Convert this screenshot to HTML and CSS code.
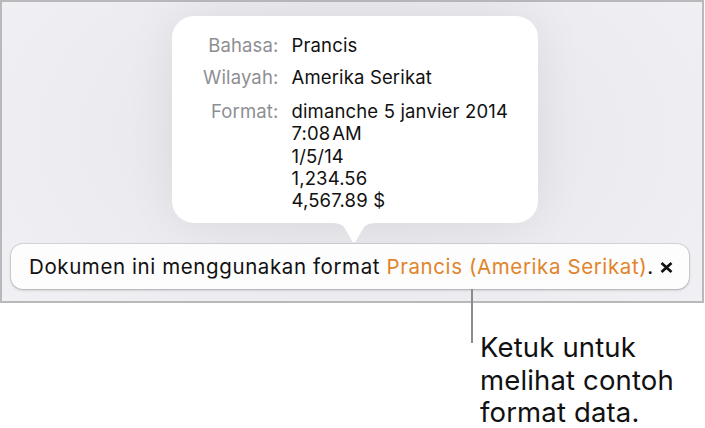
FILE: index.html
```html
<!DOCTYPE html>
<html lang="id">
<head>
<meta charset="utf-8">
<title>Format</title>
<link rel="stylesheet" href="styles.css">
</head>
<body>
<div class="frame">
  <div class="popover">
    <div class="bubble">
      <div class="grid">
        <div class="label">Bahasa:</div>
        <div class="value">Prancis</div>
        <div class="label">Wilayah:</div>
        <div class="value">Amerika Serikat</div>
        <div class="label fmt">Format:</div>
        <div class="value fmt">dimanche 5 janvier 2014<br>7:08&#8202;AM<br>1/5/14<br>1,234.56<br>4,567.89 $</div>
      </div>
    </div>
    <svg class="arrow" width="44" height="20" viewBox="0 0 44 20"><path d="M0 0 Q8 0 12 4 L20.5 18.6 Q22 20.4 23.5 18.6 L32 4 Q36 0 44 0 Z" fill="#fff"/></svg>
  </div>
  <div class="bar">
    <span class="msg">Dokumen ini menggunakan format <span class="link">Prancis (Amerika Serikat)</span>.</span>
    <svg class="close" width="13" height="11" viewBox="0 0 13 11"><path d="M1.5 1 L11.5 10 M11.5 1 L1.5 10" stroke="#111" stroke-width="2.7" stroke-linecap="butt"/></svg>
  </div>
</div>
<div class="callout">
  <div class="leader"></div>
  <p class="note">Ketuk untuk<br>melihat contoh<br>format data.</p>
</div>
</body>
</html>
```
FILE: styles.css
```css
html, body {
  margin: 0;
  padding: 0;
  background: #fff;
}
body {
  width: 705px;
  height: 428px;
  overflow: hidden;
  font-family: "Inter", "Liberation Sans", sans-serif;
  color: #111;
}
.frame {
  box-sizing: border-box;
  width: 704px;
  height: 303px;
  border: 2px solid #b9b9bc;
  background: radial-gradient(ellipse 420px 260px at 50% 45%, #e3e3e7 0%, #ececf0 60%, #f0f0f4 100%);
  display: flex;
  flex-direction: column;
  padding: 14px 13px 12px 9px;
}
.popover {
  display: flex;
  flex-direction: column;
  align-items: center;
  margin-left: 10px;
}
.bubble {
  box-sizing: border-box;
  width: 366px;
  height: 207px;
  background: #fff;
  border-radius: 22px;
  box-shadow: 0 0 50px rgba(0, 0, 0, 0.07);
  padding: 18px 0 0 31px;
}
.grid {
  display: grid;
  grid-template-columns: auto auto;
  justify-content: start;
  column-gap: 13px;
  row-gap: 9.5px;
  font-size: 18.5px;
  letter-spacing: 0.15px;
  line-height: 22.3px;
}
.grid .fmt {
  margin-top: 2.5px;
}
.label {
  color: #8e8e93;
  text-align: right;
}
.value {
  color: #111;
}
.arrow {
  display: block;
  margin-left: -2px;
}
.bar {
  margin-top: 1px;
  box-sizing: border-box;
  height: 45px;
  background: #fdfdfd;
  border-radius: 12px;
  box-shadow: 0 0 0 1px rgba(0, 0, 0, 0.09), 0 1px 3px rgba(0, 0, 0, 0.22);
  display: flex;
  align-items: center;
  padding: 0 0 0 18px;
  font-size: 20.5px;
  letter-spacing: 0.6px;
}
.msg {
  white-space: nowrap;
}
.link {
  color: #e0852b;
}
.close {
  display: block;
  margin-left: 6px;
  margin-top: 1px;
}
.callout {
  position: relative;
  display: flex;
  margin: 28px 0 0 480px;
}
.leader {
  position: absolute;
  left: -9px;
  top: -42px;
  width: 2px;
  height: 54px;
  background: #8c8c8c;
}
.note {
  margin: 0;
  font-size: 27.5px;
  letter-spacing: 0.15px;
  line-height: 32.5px;
  color: #111;
}
```
